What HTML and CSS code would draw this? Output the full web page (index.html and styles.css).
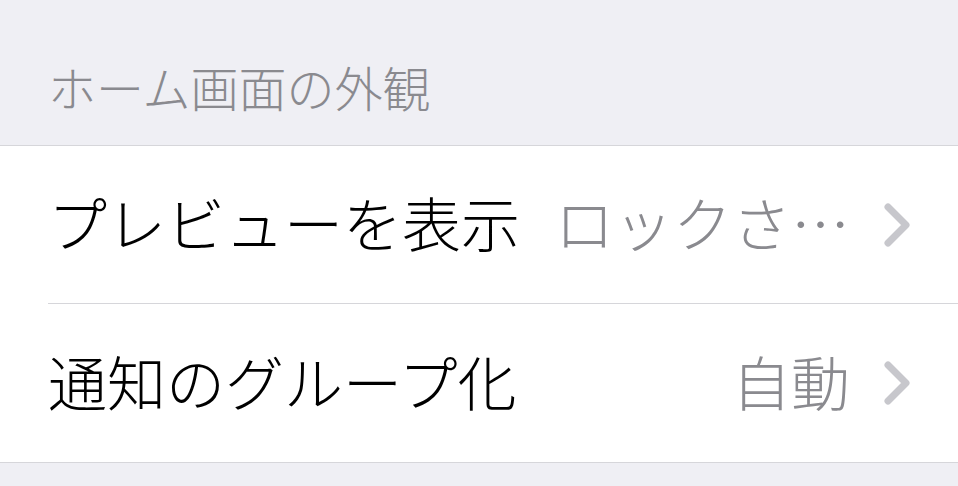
FILE: index.html
```html
<!DOCTYPE html>
<html lang="ja">
<head>
<meta charset="utf-8">
<link rel="stylesheet" href="styles.css">
</head>
<body>
<div class="page">
  <div class="section-header">ホーム画面の外観</div>
  <div class="group">
    <div class="row">
      <div class="row-inner with-sep">
        <span class="label">プレビューを表示</span>
        <span class="value">ロックさ…</span>
        <svg class="chevron" width="26" height="44" viewBox="0 0 26 44"><polyline points="4,4 22,22 4,40" fill="none" stroke="#c7c7cc" stroke-width="7" stroke-linecap="round" stroke-linejoin="round"/></svg>
      </div>
    </div>
    <div class="row">
      <div class="row-inner">
        <span class="label">通知のグループ化</span>
        <span class="value">自動</span>
        <svg class="chevron" width="26" height="44" viewBox="0 0 26 44"><polyline points="4,4 22,22 4,40" fill="none" stroke="#c7c7cc" stroke-width="7" stroke-linecap="round" stroke-linejoin="round"/></svg>
      </div>
    </div>
  </div>
</div>
</body>
</html>
```
FILE: styles.css
```css
html, body {
  margin: 0;
  padding: 0;
  background: #efeff4;
}
.page {
  width: 958px;
  height: 486px;
  background: #efeff4;
  font-family: "Noto Sans CJK JP", "Noto Sans", sans-serif;
  font-weight: 300;
  overflow: hidden;
}
.section-header {
  height: 145px;
  box-sizing: border-box;
  display: flex;
  align-items: flex-end;
  padding-left: 48px;
  padding-bottom: 35px;
  font-size: 48px;
  line-height: 1;
  color: #8a8a8f;
}
.group {
  background: #ffffff;
  border-top: 1px solid #d6d6da;
  border-bottom: 1px solid #d6d6da;
}
.row {
  padding-left: 48px;
  height: 158px;
  display: flex;
}
.row-inner {
  flex: 1;
  display: flex;
  align-items: center;
  padding-right: 48px;
}
.label,
.value {
  position: relative;
  top: -3px;
}
.row-inner.with-sep {
  border-bottom: 1px solid #d6d6da;
}
.label {
  font-size: 59px;
  color: #000;
  flex: 1;
  white-space: nowrap;
}
.value {
  font-size: 59px;
  color: #8a8a8f;
  margin-right: 34px;
  white-space: nowrap;
}
.chevron {
  flex: none;
}
```
